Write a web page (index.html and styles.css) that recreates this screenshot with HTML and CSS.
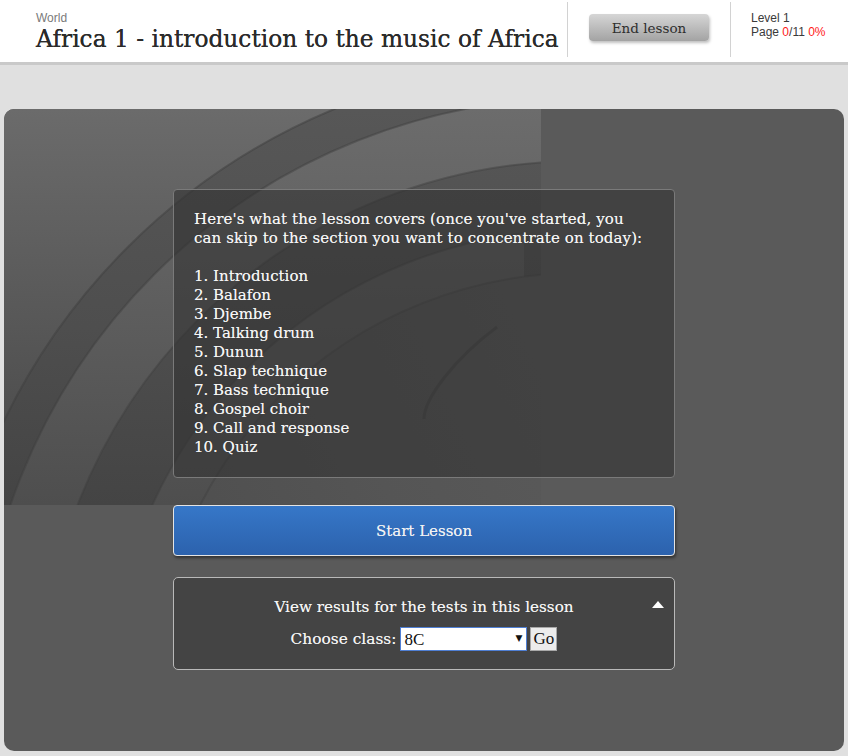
FILE: index.html
```html
<!DOCTYPE html>
<html lang="en">
<head>
<meta charset="utf-8">
<title>Africa 1 - introduction to the music of Africa</title>
<link rel="stylesheet" href="styles.css">
</head>
<body>
<header class="topbar">
  <div class="title-block">
    <div class="crumb">World</div>
    <h1 class="title">Africa 1 - introduction to the music of Africa</h1>
  </div>
  <div class="end-block">
    <button class="end-btn" type="button">End lesson</button>
  </div>
  <div class="progress">
    <div>Level 1</div>
    <div>Page <span class="red">0</span>/11 <span class="red">0%</span></div>
  </div>
</header>
<main class="stage">
  <section class="panel">
    <svg class="deco" width="537" height="396" viewBox="0 0 537 396" aria-hidden="true">
      <defs>
        <linearGradient id="gOuter" gradientUnits="userSpaceOnUse" x1="0" y1="0" x2="0" y2="396">
          <stop offset="0" stop-color="#6b6b6b"/>
          <stop offset="0.55" stop-color="#575757"/>
          <stop offset="1" stop-color="#474747"/>
        </linearGradient>
        <linearGradient id="gDark" gradientUnits="userSpaceOnUse" x1="0" y1="0" x2="0" y2="396">
          <stop offset="0" stop-color="#575757"/>
          <stop offset="0.55" stop-color="#4e4e4e"/>
          <stop offset="1" stop-color="#444444"/>
        </linearGradient>
        <linearGradient id="gLight" gradientUnits="userSpaceOnUse" x1="0" y1="0" x2="0" y2="396">
          <stop offset="0" stop-color="#6c6c6c"/>
          <stop offset="0.55" stop-color="#5c5c5c"/>
          <stop offset="1" stop-color="#4e4e4e"/>
        </linearGradient>
        <linearGradient id="gInner" gradientUnits="userSpaceOnUse" x1="0" y1="396" x2="537" y2="150">
          <stop offset="0" stop-color="#4a4a4a"/>
          <stop offset="0.6" stop-color="#555555"/>
          <stop offset="1" stop-color="#5a5a5a"/>
        </linearGradient>
        <clipPath id="cut2"><rect x="0" y="0" width="520" height="396"/></clipPath>
      </defs>
      <rect x="0" y="0" width="537" height="396" fill="url(#gOuter)"/>
      <circle cx="576" cy="591" r="640" fill="url(#gDark)" stroke="#3e3e3e" stroke-opacity="0.5" stroke-width="2"/>
      <circle cx="576" cy="591" r="602" fill="url(#gLight)" stroke="#3e3e3e" stroke-opacity="0.45" stroke-width="2"/>
      <circle cx="576" cy="591" r="539" fill="url(#gDark)" stroke="#3e3e3e" stroke-opacity="0.45" stroke-width="2"/>
      <circle cx="576" cy="591" r="470" fill="url(#gLight)" clip-path="url(#cut2)" stroke="#3e3e3e" stroke-opacity="0.45" stroke-width="2"/>
      <circle cx="576" cy="591" r="427" fill="url(#gInner)" stroke="#3e3e3e" stroke-opacity="0.4" stroke-width="2"/>
      <path d="M493 218 C 450 250, 420 290, 420 310" fill="none" stroke="#3a3a3a" stroke-opacity="0.5" stroke-width="3"/>
    </svg>
    <div class="column">
      <div class="overview">
        <p>Here's what the lesson covers (once you've started, you can skip to the section you want to concentrate on today):</p>
        <ol class="sections">
          <li>1. Introduction</li>
          <li>2. Balafon</li>
          <li>3. Djembe</li>
          <li>4. Talking drum</li>
          <li>5. Dunun</li>
          <li>6. Slap technique</li>
          <li>7. Bass technique</li>
          <li>8. Gospel choir</li>
          <li>9. Call and response</li>
          <li>10. Quiz</li>
        </ol>
      </div>
      <button class="start-btn" type="button">Start Lesson</button>
      <div class="results">
        <span class="collapse" aria-hidden="true"></span>
        <div class="results-title">View results for the tests in this lesson</div>
        <div class="class-row">
          <label for="cls">Choose class:</label>
          <span class="select-wrap">
            <select id="cls" class="class-select"><option>8C</option></select>
            <span class="arrow">&#9660;</span>
          </span>
          <button class="go-btn" type="button">Go</button>
        </div>
      </div>
    </div>
  </section>
</main>
</body>
</html>
```

FILE: styles.css
```css
* { box-sizing: border-box; }

html, body {
  margin: 0;
  padding: 0;
}

body {
  background: #e0e0e0;
  font-family: "DejaVu Serif", serif;
  width: 848px;
  height: 756px;
  overflow: hidden;
}

.topbar {
  display: flex;
  align-items: flex-start;
  height: 65px;
  background: #ffffff;
  border-bottom: 3px solid #c9c9c9;
}

.title-block {
  width: 568px;
  padding: 9px 0 0 36px;
  border-right: 1px solid #d2d2d2;
  height: 55px;
  margin-top: 2px;
}

.crumb {
  font-family: "Liberation Sans", Arial, sans-serif;
  font-size: 12px;
  line-height: 14px;
  color: #7a7a7a;
}

.title {
  margin: 0;
  font-family: "DejaVu Serif", serif;
  font-weight: normal;
  font-size: 23.3px;
  line-height: 28px;
  color: #2b2b2b;
  white-space: nowrap;
  text-shadow: 0 0 0.4px #2b2b2b;
}

.end-block {
  width: 163px;
  height: 55px;
  margin-top: 2px;
  border-right: 1px solid #d2d2d2;
  display: flex;
  justify-content: center;
  padding-top: 12px;
}

.end-btn {
  width: 120px;
  height: 27px;
  border: none;
  border-radius: 4px;
  background: linear-gradient(#d6d6d6, #a3a3a3);
  box-shadow: 1px 2px 3px rgba(0, 0, 0, 0.25);
  font-family: "DejaVu Serif", serif;
  font-size: 13.5px;
  color: #2e2e2e;
  padding: 0;
}

.progress {
  padding: 11px 0 0 20px;
  font-family: "Liberation Sans", Arial, sans-serif;
  font-size: 12px;
  line-height: 14px;
  color: #3a3a3a;
}

.red { color: #ff1a1a; }

.stage {
  padding: 44px 4px 0 4px;
}

.panel {
  position: relative;
  height: 642px;
  border-radius: 10px;
  background: #5a5a5a;
  overflow: hidden;
  padding-top: 80px;
}

.deco {
  position: absolute;
  left: 0;
  top: 0;
  display: block;
}

.column {
  position: relative;
  width: 502px;
  margin: 0 auto;
  display: flex;
  flex-direction: column;
  color: #f6f6f6;
  font-size: 15px;
  line-height: 19px;
  text-shadow: 0 0 0.5px rgba(255, 255, 255, 0.6);
}

.overview {
  height: 289px;
  border: 1px solid #7a7a7a;
  border-radius: 4px;
  background: rgba(52, 52, 52, 0.62);
  padding: 20px 20px 20px 20px;
}

.overview p {
  margin: 0 0 19px 0;
  max-width: 455px;
  letter-spacing: 0.1px;
}

.sections {
  list-style: none;
  margin: 0;
  padding: 0;
  font-size: 15px;
}

.start-btn {
  margin-top: 27px;
  height: 51px;
  width: 100%;
  border: 1px solid #e4e4e4;
  border-radius: 4px;
  background: linear-gradient(#3677c8, #2c62ad);
  box-shadow: 1px 2px 3px rgba(0, 0, 0, 0.45);
  color: #f2f2f2;
  font-family: "DejaVu Serif", serif;
  font-size: 15px;
  padding: 0;
  text-shadow: 0 0 0.5px rgba(255, 255, 255, 0.6);
}

.results {
  position: relative;
  margin-top: 21px;
  height: 93px;
  border: 1px solid #b9b9b9;
  border-radius: 5px;
  background: rgba(58, 58, 58, 0.7);
  padding-top: 20px;
  text-align: center;
}

.collapse {
  position: absolute;
  right: 10px;
  top: 23px;
  width: 0;
  height: 0;
  border-left: 6px solid transparent;
  border-right: 6px solid transparent;
  border-bottom: 7px solid #ffffff;
}

.results-title {
  font-size: 15.2px;
  line-height: 19px;
}

.class-row {
  margin-top: 10px;
  display: flex;
  justify-content: center;
  align-items: center;
  height: 24px;
}

.class-row label {
  font-size: 15.4px;
  margin-right: 4px;
}

.select-wrap {
  position: relative;
  display: inline-block;
  width: 127px;
  height: 24px;
}

.class-select {
  appearance: none;
  -webkit-appearance: none;
  width: 127px;
  height: 24px;
  margin: 0;
  border: 1px solid #4f7fd4;
  border-radius: 0;
  background: #ffffff;
  font-family: "Liberation Serif", serif;
  font-size: 17px;
  color: #111;
  padding: 0 0 0 3px;
}

.arrow {
  position: absolute;
  right: 5px;
  top: 6px;
  font-size: 9px;
  line-height: 10px;
  color: #111;
  pointer-events: none;
  text-shadow: none;
}

.go-btn {
  margin-left: 3px;
  width: 27px;
  height: 24px;
  padding: 0;
  border: 1px solid #a8a8a8;
  background: #ececec;
  font-family: "Liberation Serif", serif;
  font-size: 17px;
  color: #111;
  text-shadow: none;
}
```
